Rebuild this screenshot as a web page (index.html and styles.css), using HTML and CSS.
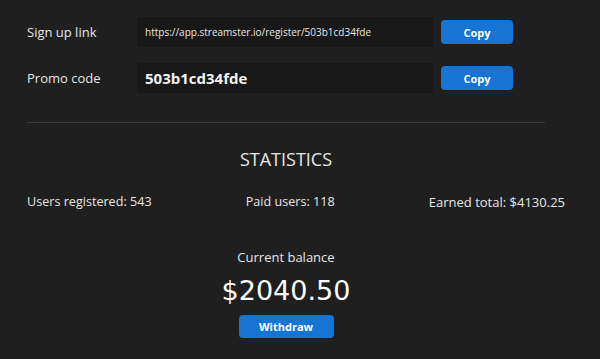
FILE: index.html
```html
<!DOCTYPE html>
<html lang="en">
<head>
  <meta charset="UTF-8">
  <meta name="viewport" content="width=device-width, initial-scale=1.0">
  <title>Referral</title>
  <link rel="stylesheet" href="styles.css">
</head>
<body>

  <div class="container">
    <div class="linha">
      <span class="rotulo">Sign up link</span>
      <div class="campo campo-link">https://app.streamster.io/register/503b1cd34fde</div>
      <button class="botao">Copy</button>
    </div>

    <div class="linha">
      <span class="rotulo">Promo code</span>
      <div class="campo campo-codigo">503b1cd34fde</div>
      <button class="botao">Copy</button>
    </div>

    <hr class="divisor">

    <h2 class="titulo">STATISTICS</h2>

    <div class="estatisticas">
      <span>Users registered: 543</span>
      <span>Paid users: 118</span>
      <span>Earned total: $4130.25</span>
    </div>

    <div class="saldo">
      <p class="saldo-rotulo">Current balance</p>
      <p class="saldo-valor">$2040.50</p>
      <button class="botao botao-saque">Withdraw</button>
    </div>
  </div>

</body>
</html>
```

FILE: styles.css
```css
:root {
  --cor-fundo: #1f1f1f;
  --cor-campo: #181818;
  --cor-texto: #e6e6e6;
  --cor-botao: #1574d4;
}

body {
  margin: 0;
  padding: 0;
  background-color: var(--cor-fundo);
  color: var(--cor-texto);
  font-family: 'Open Sans', 'Noto Sans', sans-serif;
}

.container {
  padding: 17px 0 0 27px;
  width: 538px;
}

.linha {
  display: flex;
  align-items: center;
  height: 30px;
  margin-bottom: 16px;
}

.rotulo {
  width: 110px;
  font-size: 13px;
}

.campo {
  width: 296px;
  height: 30px;
  box-sizing: border-box;
  padding: 0 8px;
  display: flex;
  align-items: center;
  background-color: var(--cor-campo);
  white-space: nowrap;
  overflow: hidden;
}

.campo-link {
  font-size: 10px;
}

.campo-codigo {
  font-weight: bold;
  font-size: 15px;
  color: #f2f2f2;
}

.botao {
  margin-left: 8px;
  width: 72px;
  height: 24px;
  border: none;
  border-radius: 4px;
  background-color: var(--cor-botao);
  color: #fff;
  font-family: 'Open Sans', sans-serif;
  font-weight: bold;
  font-size: 11px;
  cursor: pointer;
}

.divisor {
  border: none;
  border-top: 1px solid #3a3a3a;
  margin: 29px 0 0 0;
  width: 518px;
}

.titulo {
  margin: 24px 0 0 0;
  text-align: center;
  font-weight: normal;
  font-size: 18px;
  line-height: 24px;
  padding-right: 20px;
}

.estatisticas {
  display: flex;
  justify-content: space-between;
  margin-top: 22px;
  font-size: 12.6px;
  line-height: 18px;
}

.estatisticas span:last-child {
  font-size: 13px;
}

.saldo {
  display: flex;
  flex-direction: column;
  align-items: center;
  padding-right: 20px;
  margin-top: 37px;
}

.saldo-rotulo {
  margin: 0;
  font-size: 13px;
  line-height: 18px;
}

.saldo-valor {
  margin: 9px 0 0 0;
  font-family: 'DejaVu Sans', sans-serif;
  font-size: 27px;
  line-height: 32px;
  color: #fff;
}

.botao-saque {
  margin: 8px 0 0 0;
  width: 95px;
  height: 23px;
}
```
